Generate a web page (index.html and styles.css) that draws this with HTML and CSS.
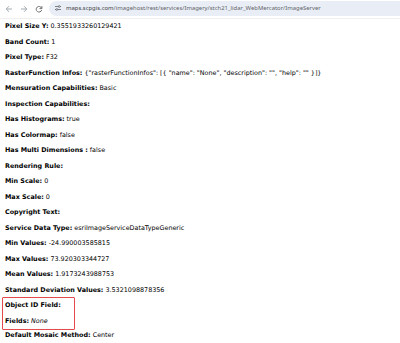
FILE: index.html
```html
<!DOCTYPE html>
<html lang="en">
  <head>
    <meta charset="UTF-8">
    <meta name="viewport" content="width=device-width, initial-scale=1.0">
    <title>ImageServer</title>
    <link rel="stylesheet" href="styles.css">
  </head>
  <body>
    <!-- Browser toolbar -->
    <div class="toolbar">
      <span class="nav-btn">
        <svg width="8" height="8" viewBox="0 0 8 8"><path d="M7 4H1.3M4 1.2L1.2 4 4 6.8" fill="none" stroke="#9aa0a6" stroke-width="0.9"/></svg>
      </span>
      <span class="nav-btn">
        <svg width="8" height="8" viewBox="0 0 8 8"><path d="M1 4h5.7M4 1.2L6.8 4 4 6.8" fill="none" stroke="#9aa0a6" stroke-width="0.9"/></svg>
      </span>
      <span class="nav-btn">
        <svg width="8" height="8" viewBox="0 0 8 8"><path d="M6.6 3.2A2.8 2.8 0 1 0 6.7 5" fill="none" stroke="#5f6368" stroke-width="0.9"/><path d="M6.9 1.2v2.4H4.5" fill="none" stroke="#5f6368" stroke-width="0.9"/></svg>
      </span>
      <div class="omnibox">
        <span class="site-icon">
          <svg width="8" height="8" viewBox="0 0 8 8"><path d="M1 2.5h3.5M6 2.5h1M1 5.5h1M3.5 5.5H7" stroke="#5f6368" stroke-width="0.8"/><circle cx="5.2" cy="2.5" r="0.9" fill="none" stroke="#5f6368" stroke-width="0.7"/><circle cx="2.8" cy="5.5" r="0.9" fill="none" stroke="#5f6368" stroke-width="0.7"/></svg>
        </span>
        <span class="url"><span class="host">maps.scpgis.com</span>/imagehost/rest/services/Imagery/stch21_lidar_WebMercator/ImageServer</span>
      </div>
    </div>

    <!-- Service properties -->
    <div class="props">
      <div class="row"><b>Pixel Size Y:</b> 0.3551933260129421</div>
      <div class="row"><b>Band Count:</b> 1</div>
      <div class="row"><b>Pixel Type:</b> F32</div>
      <div class="row"><b>RasterFunction Infos:</b> {"rasterFunctionInfos": [{ "name": "None", "description": "", "help": "" }]}</div>
      <div class="row"><b>Mensuration Capabilities:</b> Basic</div>
      <div class="row"><b>Inspection Capabilities:</b></div>
      <div class="row"><b>Has Histograms:</b> true</div>
      <div class="row"><b>Has Colormap:</b> false</div>
      <div class="row"><b>Has Multi Dimensions :</b> false</div>
      <div class="row"><b>Rendering Rule:</b></div>
      <div class="row"><b>Min Scale:</b> 0</div>
      <div class="row"><b>Max Scale:</b> 0</div>
      <div class="row"><b>Copyright Text:</b></div>
      <div class="row"><b>Service Data Type:</b> esriImageServiceDataTypeGeneric</div>
      <div class="row"><b>Min Values:</b> -24.990003585815</div>
      <div class="row"><b>Max Values:</b> 73.920303344727</div>
      <div class="row"><b>Mean Values:</b> 1.9173243988753</div>
      <div class="row"><b>Standard Deviation Values:</b> 3.5321098878356</div>
      <div class="highlight">
        <div class="row"><b>Object ID Field:</b></div>
        <div class="row"><b>Fields:</b> <i>None</i></div>
      </div>
      <div class="row"><b>Default Mosaic Method:</b> Center</div>
    </div>
  </body>
</html>
```

FILE: styles.css
```css
/* General */
body {
  margin: 0;
  background: #fff;
  color: #000;
  font-family: "DejaVu Sans", Verdana, sans-serif;
  overflow: hidden;
}

/* Browser toolbar */
.toolbar {
  display: flex;
  align-items: center;
  height: 18px;
  padding-left: 1px;
  border-bottom: 1px solid #f0f0f0;
}

.nav-btn {
  width: 15px;
  display: flex;
  justify-content: center;
}

.omnibox {
  flex: 1;
  display: flex;
  align-items: center;
  height: 15px;
  margin-left: 3px;
  margin-bottom: 2px;
  background: #e9eef6;
  border-radius: 8px 0 0 8px;
}

.site-icon {
  display: flex;
  margin-left: 2px;
  width: 14px;
  justify-content: center;
}

.url {
  margin-left: 1px;
  font-family: "Noto Sans", sans-serif;
  font-size: 5.9px;
  color: #5f6368;
  white-space: nowrap;
}

.host {
  color: #3c4043;
}

/* Properties list */
.props {
  padding: 0 0 0 5px;
  font-size: 6.4px;
}

.row {
  height: 15.5px;
  line-height: 15.5px;
  white-space: nowrap;
}

.row b {
  font-weight: bold;
}

.highlight {
  width: 69px;
  margin: -1px 0 -2px -3px;
  padding-left: 2px;
  border: 1.5px solid #e5484d;
  border-radius: 1px;
}
```
